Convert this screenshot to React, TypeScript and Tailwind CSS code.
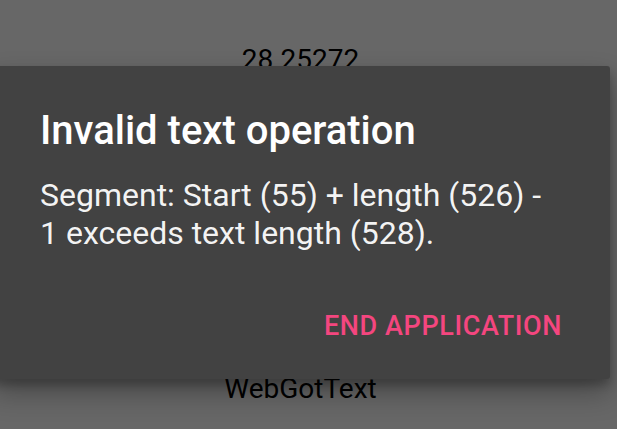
export default function App() {
  return (
    <div className="relative h-[429px] w-full overflow-hidden bg-[#676767] font-['Roboto',sans-serif]">
      <div className="flex flex-col items-center pt-[44px] pr-[16px] text-black">
        <p className="text-[28px] leading-[32px]">28.25272</p>
        <p className="mt-[297px] text-[28px] leading-[32px]">WebGotText</p>
      </div>

      <div className="absolute left-[-8px] right-[7px] top-[66px] h-[313px] rounded-[3px] bg-[#424242] pl-[48px] pr-[48px] pt-[42px] shadow-[0_14px_28px_rgba(0,0,0,0.3),0_6px_10px_rgba(0,0,0,0.22)]">
        <h2 className="text-[40px] font-medium leading-[46px] text-white">Invalid text operation</h2>
        <p className="mt-[22px] text-[32px] leading-[38px] text-white/95">
          Segment: Start (55) + length (526) -<br />1 exceeds text length (528).
        </p>
        <div className="mt-[58px] flex justify-end">
          <button className="text-[27px] font-medium leading-[32px] tracking-[0.6px] text-[#f4467f]">END APPLICATION</button>
        </div>
      </div>
    </div>
  );
}
